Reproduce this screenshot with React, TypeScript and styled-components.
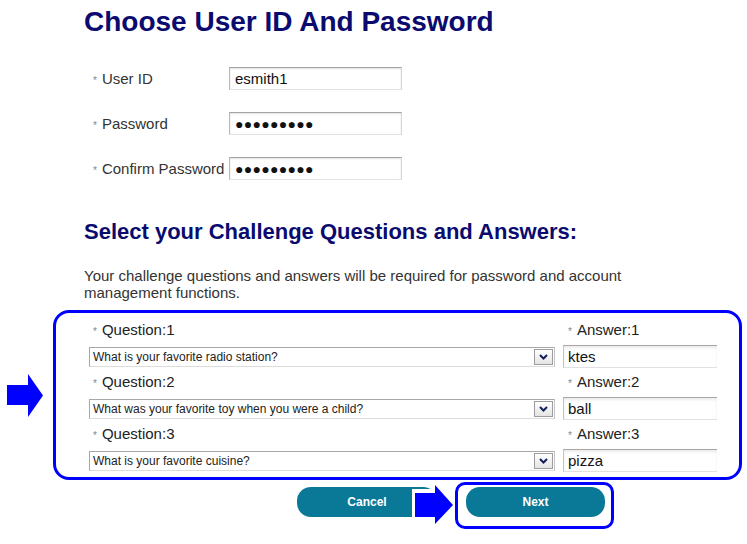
import React from "react";
import styled, { createGlobalStyle } from "styled-components";

const NAVY = "#0b0b6f";
const BLUE = "#0000ff";
const TEAL = "#0a7897";

const GlobalStyle = createGlobalStyle`
  html, body {
    margin: 0;
    padding: 0;
    background: #fff;
  }
  body {
    font-family: "Liberation Sans", Arial, sans-serif;
  }
`;

const questions = [
  { id: 1, question: "What is your favorite radio station?", answer: "ktes" },
  { id: 2, question: "What was your favorite toy when you were a child?", answer: "ball" },
  { id: 3, question: "What is your favorite cuisine?", answer: "pizza" },
];

const App: React.FC = () => {
  return (
    <Page>
      <GlobalStyle />
      <Title>Choose User ID And Password</Title>

      <AccountForm>
        <FieldRow>
          <FieldLabel>
            <Req>*</Req>User ID
          </FieldLabel>
          <TextInput readOnly value="esmith1" />
        </FieldRow>
        <FieldRow>
          <FieldLabel>
            <Req>*</Req>Password
          </FieldLabel>
          <TextInput readOnly $masked value="●●●●●●●●●" />
        </FieldRow>
        <FieldRow>
          <FieldLabel>
            <Req>*</Req>Confirm Password
          </FieldLabel>
          <TextInput readOnly $masked value="●●●●●●●●●" />
        </FieldRow>
      </AccountForm>

      <SubTitle>Select your Challenge Questions and Answers:</SubTitle>
      <Intro>
        Your challenge questions and answers will be required for password and
        account management functions.
      </Intro>

      <ChallengeRow>
        <SideArrow width="36" height="43" viewBox="0 0 36 43">
          <polygon points="0,11 21,11 21,0 36,21.5 21,43 21,31 0,31" fill={BLUE} />
        </SideArrow>
        <ChallengeBox>
          {questions.map((q) => (
            <QuestionGroup key={q.id}>
              <QLabel>
                <Req>*</Req>Question:{q.id}
              </QLabel>
              <QLabel $answer>
                <Req>*</Req>Answer:{q.id}
              </QLabel>
              <SelectBox>
                <SelectText>{q.question}</SelectText>
                <DropButton>
                  <svg width="9" height="6" viewBox="0 0 9 6">
                    <path d="M1 1 L4.5 4.5 L8 1" fill="none" stroke="#14205e" strokeWidth="2" />
                  </svg>
                </DropButton>
              </SelectBox>
              <AnswerInput readOnly value={q.answer} />
            </QuestionGroup>
          ))}
        </ChallengeBox>
      </ChallengeRow>

      <ButtonRow>
        <CancelButton>Cancel</CancelButton>
        <NextFrame>
          <ActionButton>Next</ActionButton>
        </NextFrame>
        {/* pasted arrow shape with its white backing, lying over the Cancel button */}
        <PointerOverlay width="42" height="39" viewBox="0 0 42 39">
          <rect x="0" y="4" width="42" height="35" fill="#fff" />
          <polygon points="3,8 23,8 23,0 41,20 23,39 23,32 3,32" fill={BLUE} />
        </PointerOverlay>
      </ButtonRow>
    </Page>
  );
};

export default App;

const Page = styled.div`
  width: 747px;
  height: 544px;
  overflow: hidden;
  background: #fff;
`;

const Title = styled.h1`
  margin: 6px 0 0 84px;
  font-size: 28px;
  line-height: 32px;
  font-weight: bold;
  color: ${NAVY};
`;

const AccountForm = styled.div`
  margin-top: 29px;
  padding-left: 93px;
  display: flex;
  flex-direction: column;
  gap: 22px;
`;

const FieldRow = styled.div`
  display: flex;
  align-items: center;
  height: 23px;
`;

const FieldLabel = styled.label`
  width: 136px;
  font-size: 15px;
  color: #333;
  white-space: nowrap;
`;

const Req = styled.span`
  font-size: 10px;
  color: #7d8898;
  margin-right: 5px;
`;

const TextInput = styled.input<{ $masked?: boolean }>`
  width: 173px;
  height: 23px;
  box-sizing: border-box;
  margin: 0;
  padding: 0 5px;
  border: 1px solid;
  border-color: #a4a4a4 #d6d6d6 #e2e2e2 #b8b8b8;
  box-shadow: inset 0 1px 2px rgba(0, 0, 0, 0.12);
  outline: none;
  font-family: "Liberation Sans", Arial, sans-serif;
  font-size: ${(p) => (p.$masked ? "14px" : "15px")};
  letter-spacing: ${(p) => (p.$masked ? "0.3px" : "0")};
  color: #111;
  background: #fff;
`;

const SubTitle = styled.h2`
  margin: 39px 0 0 84px;
  font-size: 22px;
  line-height: 25px;
  font-weight: bold;
  color: ${NAVY};
`;

const Intro = styled.p`
  margin: 23px 0 0 84px;
  max-width: 560px;
  font-size: 15px;
  line-height: 17px;
  color: #333;
`;

const ChallengeRow = styled.div`
  display: flex;
  align-items: center;
  gap: 10px;
  margin-top: 9px;
  padding-left: 7px;
`;

const SideArrow = styled.svg`
  display: block;
  flex-shrink: 0;
`;

const ChallengeBox = styled.div`
  width: 689px;
  box-sizing: border-box;
  border: 3px solid ${BLUE};
  border-radius: 16px;
  padding: 9px 0 5px 33px;
  display: flex;
  flex-direction: column;
  gap: 6px;
`;

const QuestionGroup = styled.div`
  display: grid;
  grid-template-columns: 466px 154px;
  grid-template-rows: 17px 23px;
  column-gap: 8px;
  row-gap: 6px;
  align-items: center;
`;

const QLabel = styled.div<{ $answer?: boolean }>`
  padding-left: ${(p) => (p.$answer ? "5px" : "4px")};
  font-size: 15px;
  line-height: 17px;
  color: #222;
`;

const SelectBox = styled.div`
  height: 20px;
  box-sizing: border-box;
  display: flex;
  align-items: center;
  border: 1px solid;
  border-color: #a8a8a8 #c4c4c4 #dcdcdc #a8a8a8;
  background: #fff;
  padding-left: 3px;
`;

const SelectText = styled.span`
  flex: 1;
  font-size: 12px;
  color: #222;
  white-space: nowrap;
`;

const DropButton = styled.span`
  width: 19px;
  height: 16px;
  box-sizing: border-box;
  margin-right: 1px;
  display: flex;
  align-items: center;
  justify-content: center;
  border: 1px solid #9c9c9c;
  background: linear-gradient(#ffffff, #e4e4e4);
`;

const AnswerInput = styled.input`
  width: 154px;
  height: 23px;
  box-sizing: border-box;
  margin: 0;
  padding: 0 4px;
  border: none;
  border-top: 1px solid #a6a6a6;
  border-left: 1px solid #c2c2c2;
  border-bottom: 1px solid #e0e0e0;
  box-shadow: inset 0 2px 3px rgba(0, 0, 0, 0.08);
  outline: none;
  font-family: "Liberation Sans", Arial, sans-serif;
  font-size: 15px;
  color: #111;
  background: #fff;
`;

const ButtonRow = styled.div`
  position: relative;
  display: flex;
  align-items: flex-start;
  margin-top: 2px;
  padding-left: 297px;
`;

const ActionButton = styled.button`
  width: 139px;
  height: 30px;
  margin: 0;
  padding: 0;
  border: none;
  border-radius: 14px;
  background: ${TEAL};
  color: #fff;
  font-family: "Liberation Sans", Arial, sans-serif;
  font-size: 12px;
  font-weight: bold;
`;

const CancelButton = styled(ActionButton)`
  width: 140px;
  margin-top: 5px;
`;

const NextFrame = styled.div`
  margin-left: 18px;
  border: 3px solid ${BLUE};
  border-radius: 10px;
  padding: 2px 6px 9px 8px;
`;

const PointerOverlay = styled.svg`
  position: absolute;
  left: 412px;
  top: 3px;
`;
